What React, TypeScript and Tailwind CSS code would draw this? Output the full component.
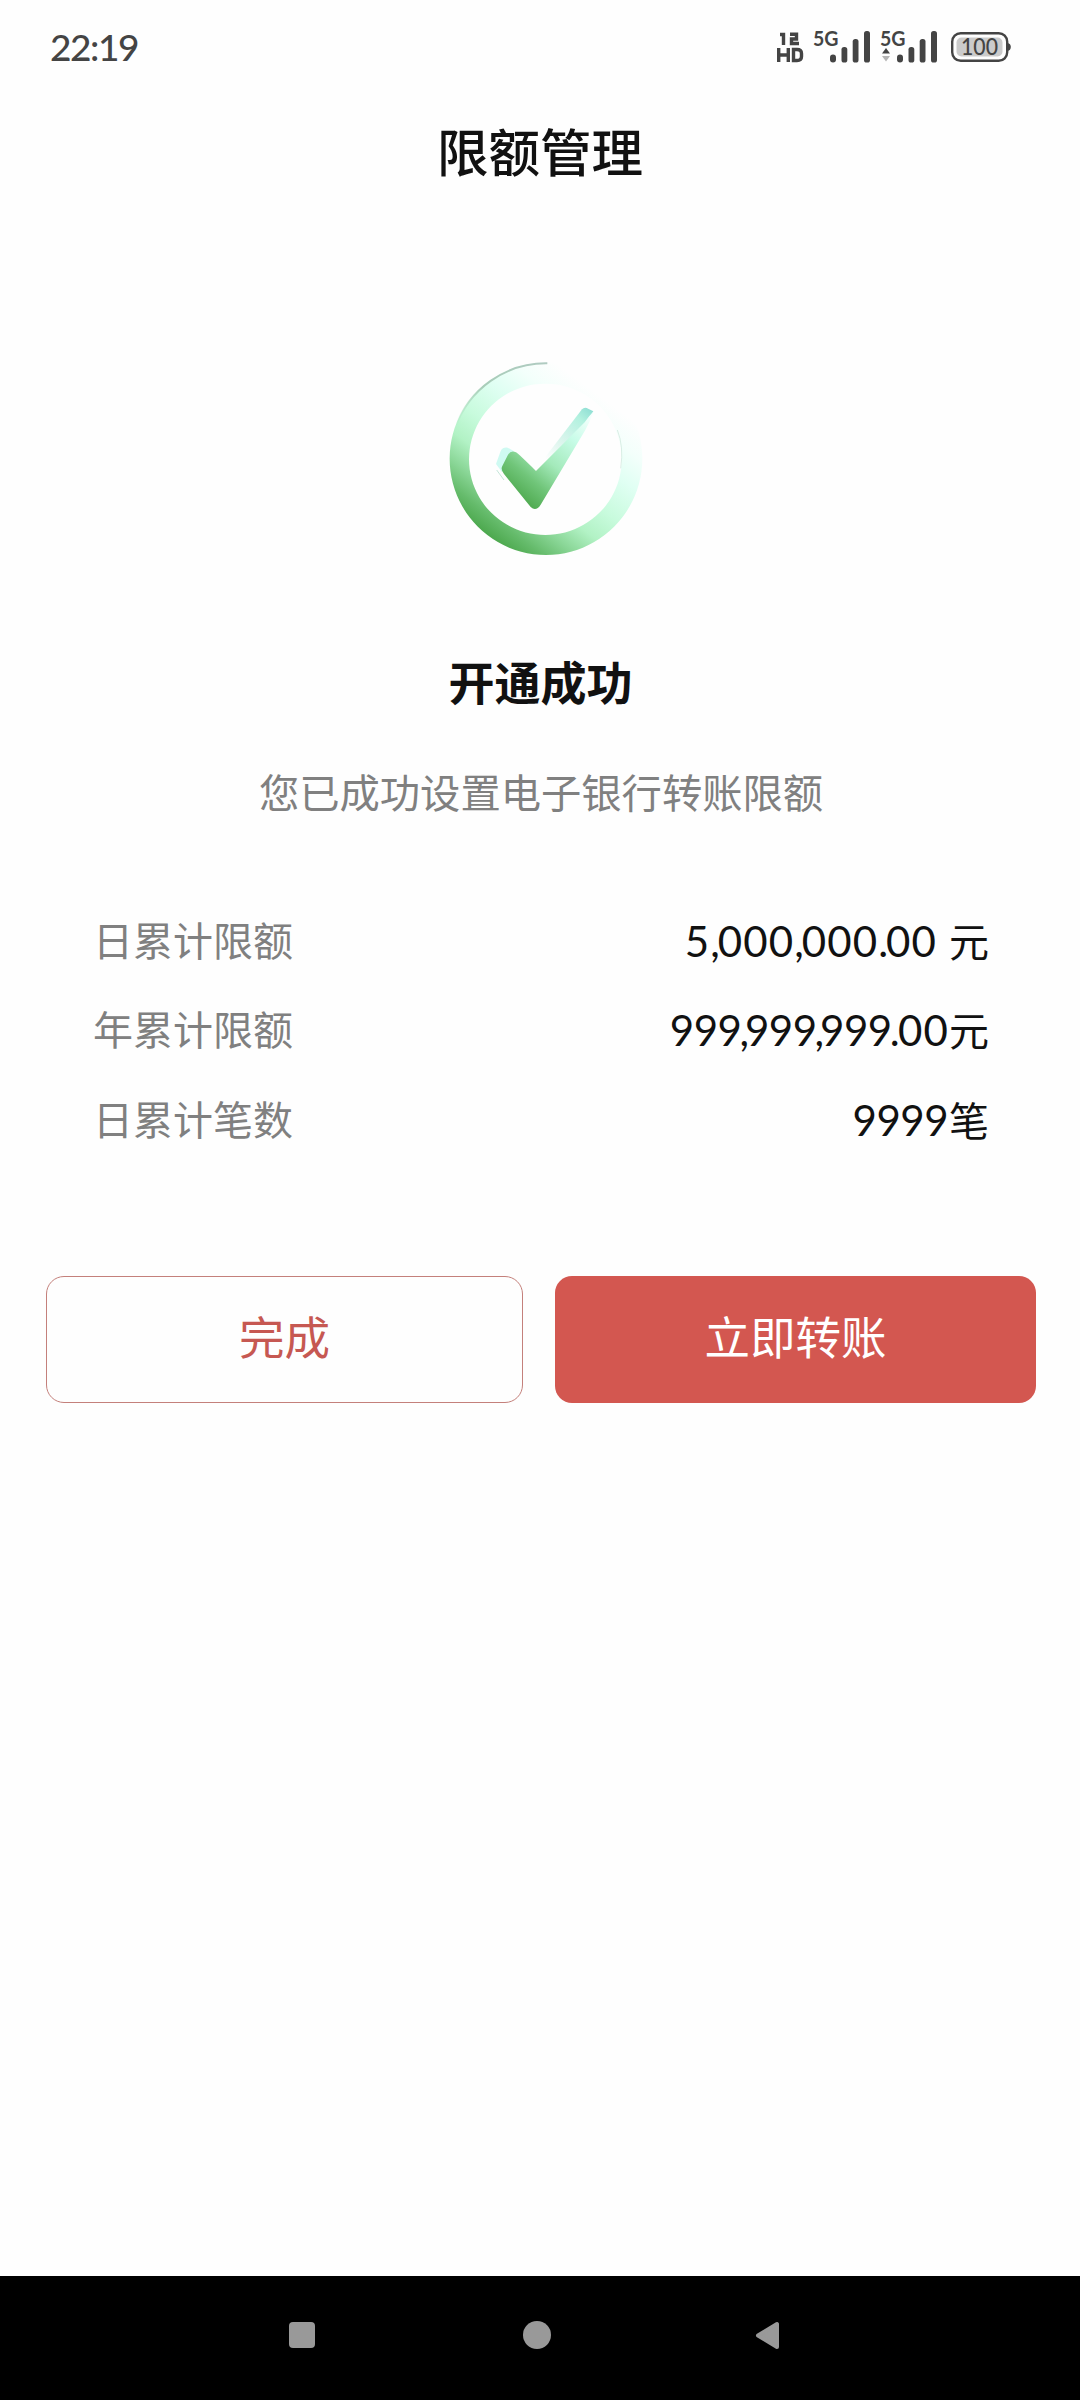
import React from 'react';

const cjk = "font-['Lato','Noto_Sans_CJK_SC',sans-serif]";

function Signal({ activity = false }: { activity?: boolean }) {
  return (
    <svg className="h-10 w-[58px]" viewBox="0 0 58 40">
      <text x="0" y="18.8" fontFamily="Lato, sans-serif" fontWeight="700" fontSize="20" textLength="25.5" lengthAdjust="spacingAndGlyphs" fill="#444">5G</text>
      {activity && (
        <>
          <path d="M2 26.5 L6 21 L10 26.5 Z" fill="#444" />
          <path d="M2 29 L6 34.5 L10 29 Z" fill="#b5b5b5" />
        </>
      )}
      <g fill="#444">
        <rect x="17" y="27.5" width="6" height="8" rx="3" />
        <rect x="28.5" y="20" width="5.8" height="15.5" rx="2.6" />
        <rect x="39.7" y="12" width="5.8" height="23.5" rx="2.6" />
        <rect x="51" y="4" width="6" height="31.5" rx="2.6" />
      </g>
    </svg>
  );
}

function StatusBar() {
  return (
    <header className="flex h-[93px] items-center justify-between pl-[50px] pr-[68px]">
      <span className="font-['Lato',sans-serif] text-[37px] font-medium leading-none tracking-[-1.4px] text-[#444]">22:19</span>
      <div className="flex items-center">
        <svg className="mr-[9px] h-10 w-7" viewBox="0 0 28 40">
          <g fill="none" stroke="#444" strokeWidth="3.4">
            <path d="M4 7.5 H7.5 V18" />
            <path d="M14 7.2 H20.5 V12 H15.5 V16.5 H23" />
            <path d="M2.7 21 V35 M12.3 21 V35 M2.7 28 H12.3" />
            <path d="M17.5 22.5 V33.5 H21 Q25.5 33.5 25.5 29.5 V26.5 Q25.5 22.5 21 22.5 Z" />
          </g>
        </svg>
        <Signal />
        <div className="w-[9px]" />
        <Signal activity />
        <svg className="ml-3 h-10 w-[62px]" viewBox="0 0 62 40">
          <rect x="2.2" y="6.2" width="55" height="27.6" rx="8.5" fill="none" stroke="#444" strokeWidth="2.4" />
          <path d="M57.5 16 Q60.8 16.7 60.8 20 Q60.8 23.3 57.5 24 Z" fill="#444" />
          <rect x="6.5" y="10.5" width="46" height="19" rx="5" fill="#cbcbcb" />
          <text x="11" y="28" fontFamily="Lato, sans-serif" fontWeight="500" fontSize="22.5" textLength="37" lengthAdjust="spacingAndGlyphs" fill="#444">100</text>
        </svg>
      </div>
    </header>
  );
}

function SuccessIcon() {
  return (
    <svg className="h-[230px] w-[230px]" viewBox="0 0 690 690">
      <defs>
        <linearGradient id="ring" gradientUnits="userSpaceOnUse" x1="200" y1="610" x2="524" y2="178">
          <stop offset="0" stopColor="#4ba74c" />
          <stop offset="0.1" stopColor="#65bb6b" />
          <stop offset="0.22" stopColor="#8bd798" />
          <stop offset="0.35" stopColor="#b2f2c5" />
          <stop offset="0.5" stopColor="#c8fbdd" />
          <stop offset="0.7" stopColor="#e0fff3" />
          <stop offset="0.85" stopColor="#f3fffb" />
          <stop offset="1" stopColor="#fefefe" />
        </linearGradient>
        <linearGradient id="tick" gradientUnits="userSpaceOnUse" x1="265" y1="480" x2="470" y2="225">
          <stop offset="0" stopColor="#4da84d" />
          <stop offset="0.22" stopColor="#70c579" />
          <stop offset="0.45" stopColor="#a4eabb" />
          <stop offset="0.75" stopColor="#c8fce8" />
          <stop offset="1" stopColor="#f3fffc" />
        </linearGradient>
        <linearGradient id="tickEdge" gradientUnits="userSpaceOnUse" x1="345" y1="355" x2="475" y2="205">
          <stop offset="0" stopColor="#fefefe" />
          <stop offset="0.35" stopColor="#dcf5ed" />
          <stop offset="0.8" stopColor="#b2f1df" />
          <stop offset="1" stopColor="#92e0d5" />
        </linearGradient>
        <linearGradient id="rim" gradientUnits="userSpaceOnUse" x1="80" y1="260" x2="350" y2="70">
          <stop offset="0" stopColor="#9ccfae" stopOpacity="0" />
          <stop offset="0.4" stopColor="#a9cdb9" />
          <stop offset="1" stopColor="#b0cbc1" />
        </linearGradient>
      </defs>
      <path fillRule="evenodd" fill="url(#ring)" d="M348 67 a289 289 0 1 1 -0.1 0 Z M346 131 a229 227 0 1 0 0.1 0 Z" />
      <path d="M75 265 A289 289 0 0 1 352 70" fill="none" stroke="url(#rim)" strokeWidth="6" />
      <path d="M562 270 Q582 320 572 385" fill="none" stroke="#cbe6da" strokeWidth="2" />
      <path d="M198 372 L212 333 Q218 321 233 323 L252 334 L216 396 Z" fill="#cffaf2" />
      <path d="M200 390 L222 420" stroke="#a6d9c5" strokeWidth="2" />
      <path d="M335 365 L456 208 Q461 202 470 204 L490 214 L440 290 L345 375 Z" fill="url(#tickEdge)" />
      <path d="M217 378 L234 344 Q243 330 258 337 Q264 340 318 393 L464 247 Q479 225 490 215 Q482 241 466 270 L332 494 Q318 516 302 501 L222 402 Q211 388 217 378 Z" fill="url(#tick)" />
    </svg>
  );
}

function Amount({ value, tight }: { value: string; tight: boolean }) {
  return (
    <span className="text-[42px]">
      {value.split(/([,.])/).map((part, i) => {
        if (part === ',') {
          return <span key={i} className={tight ? '-ml-[2px] tracking-[-4px]' : 'tracking-[-2px]'}>,</span>;
        }
        if (part === '.') {
          return <span key={i} className={tight ? '-ml-[2px] tracking-[-1.5px]' : 'tracking-[-2px]'}>.</span>;
        }
        return <span key={i} className={part.includes('0') || !tight ? 'tracking-[1.1px]' : 'tracking-[-0.5px]'}>{part}</span>;
      })}
    </span>
  );
}

const rows = [
  { label: '日累计限额', value: '5,000,000.00', unit: '元', tight: false, gap: 'ml-[12px]' },
  { label: '年累计限额', value: '999,999,999.00', unit: '元', tight: true, gap: '' },
  { label: '日累计笔数', value: '9999', unit: '笔', tight: true, gap: 'ml-[1px]' },
];

export default function App() {
  return (
    <div className={`flex h-[2400px] w-[1080px] flex-col bg-[#fefefe] text-[#111] ${cjk}`}>
      <StatusBar />
      <h1 className="flex h-[120px] items-center justify-center text-[51.5px] font-medium leading-none">限额管理</h1>
      <main className="flex flex-1 flex-col">
        <div className="mt-[127px] flex justify-center pl-[10px]">
          <SuccessIcon />
        </div>
        <h2 className="mt-[83px] flex h-[60px] items-center justify-center pl-[1px] text-[46px] font-bold leading-none">开通成功</h2>
        <p className="mt-[50px] flex h-[60px] items-center justify-center pl-[2px] text-[40.3px] leading-none text-[#808080]">您已成功设置电子银行转账限额</p>
        <dl className="mt-[73px] flex flex-col pl-[93px] pr-[91px] text-[40px] leading-none">
          {rows.map((r) => (
            <div key={r.label} className="flex h-[89.5px] items-center justify-between">
              <dt className="text-[#808080]">{r.label}</dt>
              <dd className="flex items-baseline">
                <Amount value={r.value} tight={r.tight} />
                <span className={r.gap}>{r.unit}</span>
              </dd>
            </div>
          ))}
        </dl>
        <div className="mt-[111px] flex gap-8 pl-[46px] text-[45.5px] leading-none">
          <button className="h-[127px] w-[477px] shrink-0 rounded-[18px] border border-[#c4807b] pb-[3px] text-[#c65852]">完成</button>
          <button className="h-[127px] w-[481px] shrink-0 rounded-[17px] bg-[#d35750] pb-[3px] text-white">立即转账</button>
        </div>
      </main>
      <nav className="flex h-[124px] bg-black">
        <svg className="h-[124px] w-full" viewBox="0 0 1080 124" fill="#999">
          <rect x="289" y="46" width="26" height="26" rx="4" />
          <circle cx="537" cy="59" r="14" />
          <path d="M758 59.5 L777 48 V71 Z" stroke="#999" strokeWidth="4" strokeLinejoin="round" />
        </svg>
      </nav>
    </div>
  );
}
